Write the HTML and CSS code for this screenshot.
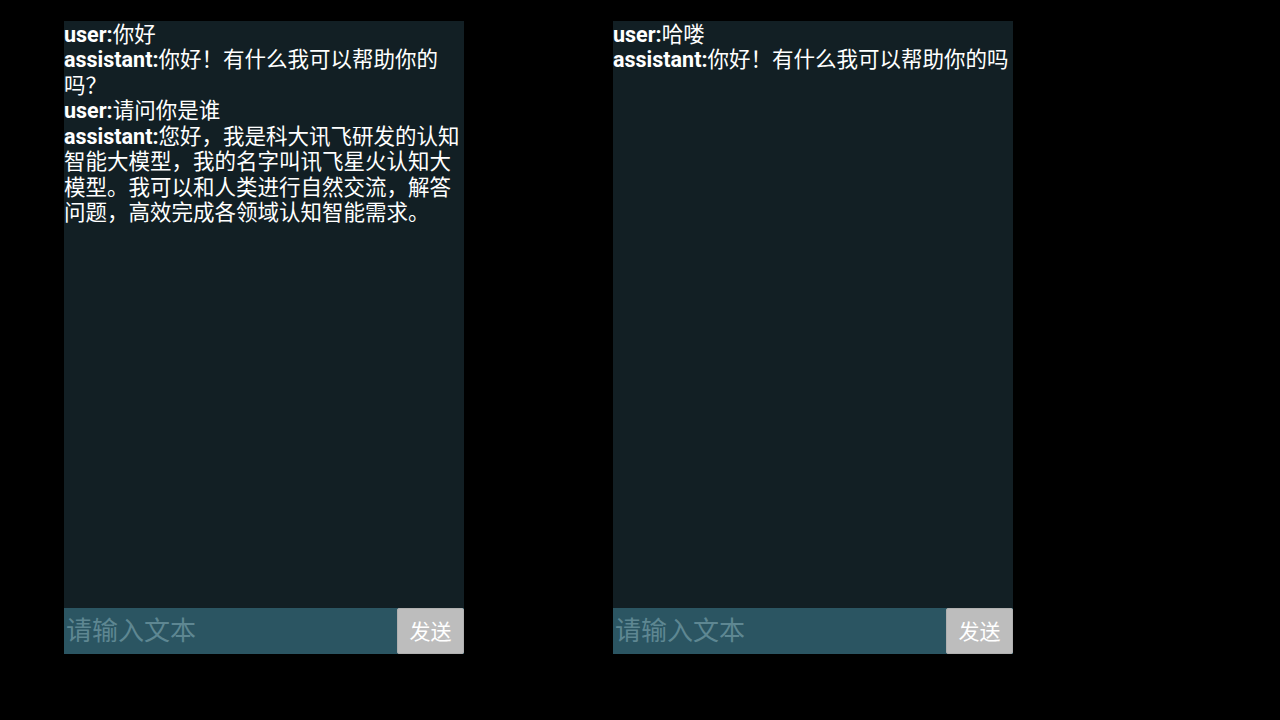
FILE: index.html
```html
<!DOCTYPE html>
<html lang="zh-CN">
<head>
<meta charset="utf-8">
<title>Chat</title>
<link rel="stylesheet" href="styles.css">
</head>
<body>
<div class="screen">
  <section class="panel">
    <div class="messages">
      <p class="msg"><b class="role">user:</b>你好</p>
      <p class="msg"><b class="role">assistant:</b>你好！有什么我可以帮助你的吗？</p>
      <p class="msg"><b class="role">user:</b>请问你是谁</p>
      <p class="msg"><b class="role">assistant:</b>您好，我是科大讯飞研发的认知智能大模型，我的名字叫讯飞星火认知大模型。我可以和人类进行自然交流，解答问题，高效完成各领域认知智能需求。</p>
    </div>
    <div class="composer">
      <input class="field" type="text" placeholder="请输入文本">
      <button class="send">发送</button>
    </div>
  </section>
  <section class="panel">
    <div class="messages">
      <p class="msg"><b class="role">user:</b>哈喽</p>
      <p class="msg"><b class="role">assistant:</b>你好！有什么我可以帮助你的吗</p>
    </div>
    <div class="composer">
      <input class="field" type="text" placeholder="请输入文本">
      <button class="send">发送</button>
    </div>
  </section>
</div>
</body>
</html>
```

FILE: styles.css
```css
html, body {
  margin: 0;
  padding: 0;
  background: #000;
  width: 1280px;
  height: 720px;
  overflow: hidden;
}

.screen {
  display: flex;
  gap: 149px;
  padding: 21px 0 0 64px;
  font-family: Roboto, "Noto Sans CJK SC", sans-serif;
}

.panel {
  width: 400px;
  height: 633px;
  background: #121f24;
  display: flex;
  flex-direction: column;
}

.messages {
  flex: 1;
  overflow: hidden;
  padding-top: 1px;
}

.msg {
  margin: 0;
  color: #ffffff;
  font-size: 21.5px;
  line-height: 25.43px;
  text-spacing-trim: space-all;
  line-break: strict;
}

.role {
  font-weight: 700;
}

.composer {
  height: 46px;
  display: flex;
  background: #2b5562;
}

.field {
  flex: 1;
  min-width: 0;
  border: none;
  outline: none;
  background: transparent;
  margin: 0;
  padding: 0 0 0 2px;
  font-family: Roboto, "Noto Sans CJK SC", sans-serif;
  font-size: 26px;
  color: #ffffff;
}

.field::placeholder {
  color: #5e8792;
}

.send {
  width: 67px;
  height: 46px;
  margin: 0;
  padding: 0 0 3px 0;
  border: 1px solid #b0b0b0;
  border-radius: 2px;
  background: #bdbdbd;
  color: #ffffff;
  font-family: Roboto, "Noto Sans CJK SC", sans-serif;
  font-size: 21px;
}
```
